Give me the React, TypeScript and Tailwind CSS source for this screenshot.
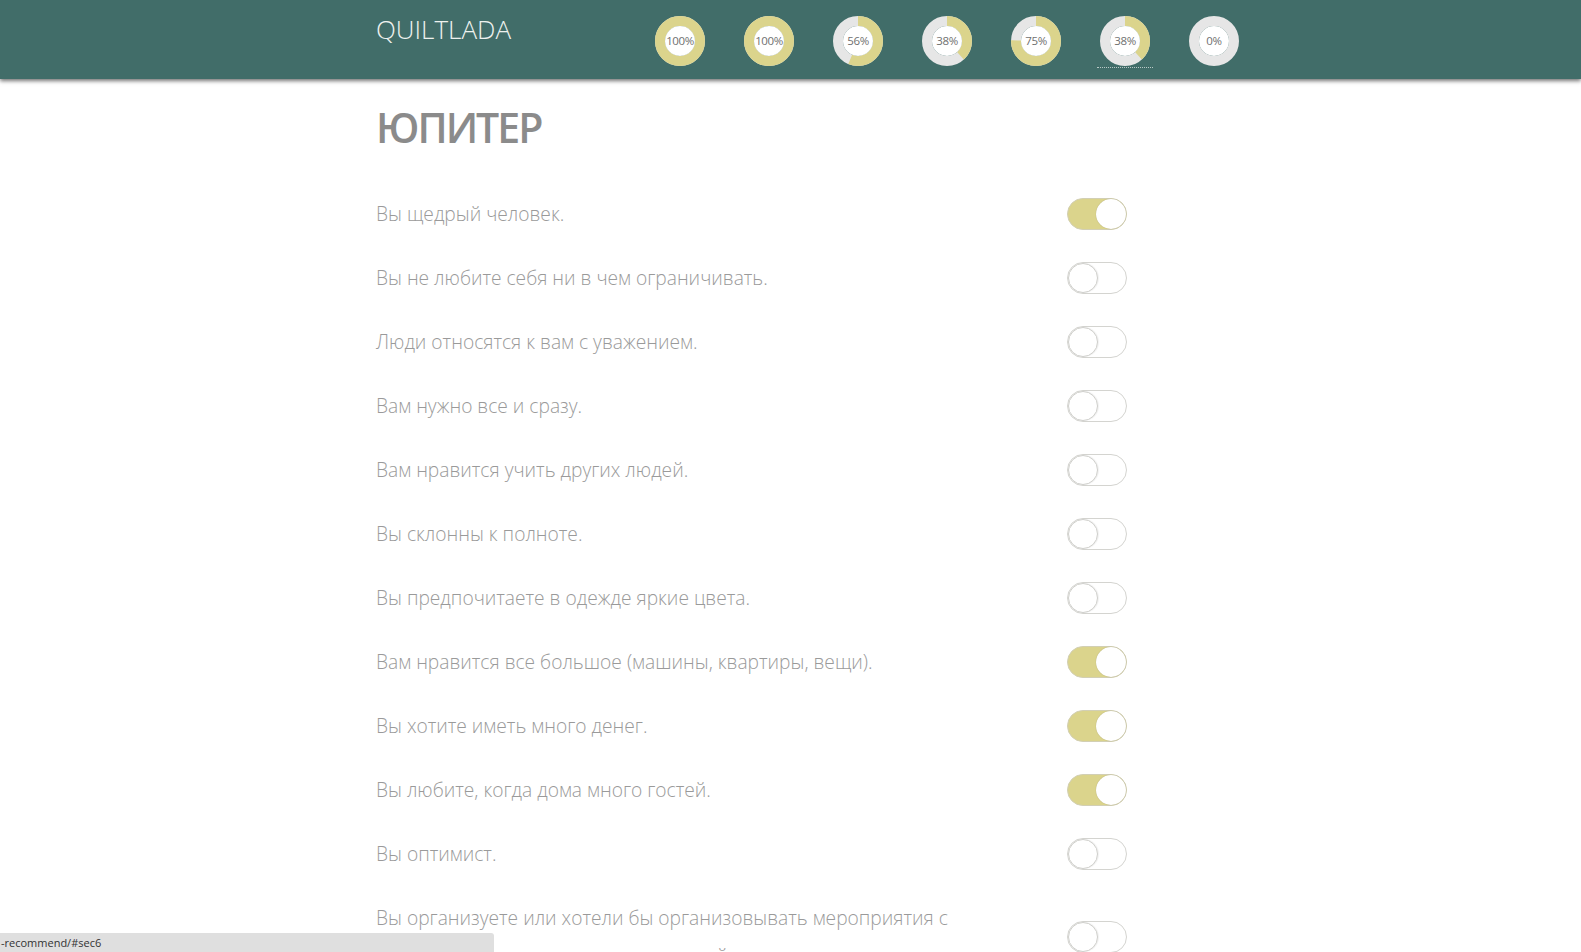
import React from "react";

const scores = [100, 100, 56, 38, 75, 38, 0];

const questions: { text: string; on: boolean }[] = [
  { text: "Вы щедрый человек.", on: true },
  { text: "Вы не любите себя ни в чем ограничивать.", on: false },
  { text: "Люди относятся к вам с уважением.", on: false },
  { text: "Вам нужно все и сразу.", on: false },
  { text: "Вам нравится учить других людей.", on: false },
  { text: "Вы склонны к полноте.", on: false },
  { text: "Вы предпочитаете в одежде яркие цвета.", on: false },
  { text: "Вам нравится все большое (машины, квартиры, вещи).", on: true },
  { text: "Вы хотите иметь много денег.", on: true },
  { text: "Вы любите, когда дома много гостей.", on: true },
  { text: "Вы оптимист.", on: false },
  {
    text: "Вы организуете или хотели бы организовывать мероприятия с участием большого количества друзей.",
    on: false,
  },
];

const Donut = ({ value, active }: { value: number; active?: boolean }) => {
  const r = 20;
  const c = 2 * Math.PI * r;
  return (
    <div className="relative w-[50px] h-[50px]">
      <svg width="50" height="50" viewBox="0 0 50 50" className="block">
        <circle cx="25" cy="25" r={r} fill="none" stroke="#e6e6e6" strokeWidth="10" />
        {value > 0 && (
          <circle
            cx="25"
            cy="25"
            r={r}
            fill="none"
            stroke="#dbd48c"
            strokeWidth="10"
            strokeDasharray={`${(c * value) / 100} ${c}`}
            transform="rotate(-90 25 25)"
          />
        )}
        <circle cx="25" cy="25" r="15" fill="#ffffff" />
      </svg>
      <span className="absolute inset-0 flex items-center justify-center text-[11.5px] text-[#6f6f6f] tracking-[-0.4px]">
        {value}%
      </span>
      {active && (
        <div className="absolute left-[-3px] right-[-3px] top-[51px] border-b border-dotted border-[#b9c9c6]"></div>
      )}
    </div>
  );
};

const Toggle = ({ on }: { on: boolean }) =>
  on ? (
    <div className="w-[60px] h-[32px] rounded-full bg-[#dbd48c] border border-[#d2cfb4] flex justify-end shrink-0">
      <div className="w-[30px] h-[30px] rounded-full bg-white shadow-[0_0_1px_rgba(0,0,0,0.25)]"></div>
    </div>
  ) : (
    <div className="w-[60px] h-[32px] rounded-full bg-white border border-[#d4d4d0] flex justify-start shrink-0">
      <div className="w-[30px] h-[30px] rounded-full bg-white border border-[#cfcfcb] shadow-[1px_0_1px_rgba(0,0,0,0.06)]"></div>
    </div>
  );

export default function App() {
  return (
    <div className="min-h-screen bg-white font-['Open_Sans',sans-serif]">
      <header className="h-[79px] bg-[#416d69] shadow-[0_2px_4px_rgba(0,0,0,0.55)] relative z-10">
        <div className="flex items-start pl-[376px] pt-[10px]">
          <div className="w-[279px] text-[26px] leading-[38px] text-[#eef2ef] font-light">
            QUILTLADA
          </div>
          <div className="flex gap-[39px] pt-[6px]">
            {scores.map((s, i) => (
              <Donut key={i} value={s} active={i === 5} />
            ))}
          </div>
        </div>
      </header>

      <main className="pl-[376px] w-[1127px]">
        <h1 className="mt-[27px] text-[41px] leading-[42px] font-semibold text-[#8b8b8b] tracking-[-2px]">
          ЮПИТЕР
        </h1>
        <div className="mt-[34px]">
          {questions.map((q, i) => (
            <div key={i} className="flex items-center justify-between py-[13px]">
              <p className="w-[600px] text-[19.2px] leading-[38px] font-light text-[#9a9a9a]">{q.text}</p>
              <Toggle on={q.on} />
            </div>
          ))}
        </div>
      </main>

      <div className="fixed left-0 bottom-0 w-[494px] h-[19px] bg-[#dfdfdf] rounded-tr-[3px] pl-[1px] text-[11px] leading-[19px] text-[#333]">
        -recommend/#sec6
      </div>
    </div>
  );
}
